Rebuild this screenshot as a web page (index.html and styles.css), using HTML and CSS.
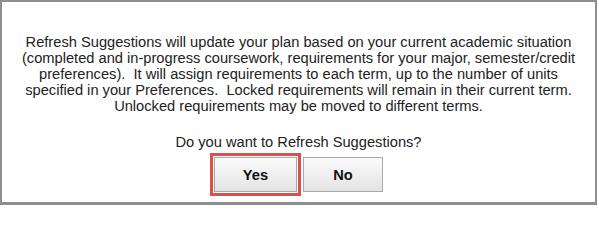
FILE: index.html
```html
<!DOCTYPE html>
<html>
<head>
<meta charset="utf-8">
<link rel="stylesheet" href="styles.css">
</head>
<body>
<div class="dialog">
  <p class="message">Refresh Suggestions will update your plan based on your current academic situation<br>(completed and in-progress coursework, requirements for your major, semester/credit<br>preferences).&nbsp; It will assign requirements to each term, up to the number of units<br>specified in your Preferences.&nbsp; Locked requirements will remain in their current term.<br>Unlocked requirements may be moved to different terms.</p>
  <p class="question">Do you want to Refresh Suggestions?</p>
  <div class="actions">
    <button class="btn btn-yes">Yes</button>
    <button class="btn btn-no">No</button>
  </div>
</div>
</body>
</html>
```

FILE: styles.css
```css
html, body {
  margin: 0;
  padding: 0;
  background: #ffffff;
}
.dialog {
  box-sizing: border-box;
  width: 597px;
  height: 205px;
  border: 2px solid #8e8e8e;
  border-bottom-width: 3px;
  background: #ffffff;
  font-family: "Liberation Sans", Arial, sans-serif;
  color: #222222;
  text-align: center;
  padding-top: 32px;
}
.message {
  margin: 0;
  font-size: 14.67px;
  line-height: 16px;
}
.question {
  margin: 20px 0 0 0;
  font-size: 14.67px;
  line-height: 16px;
}
.actions {
  margin-top: 7px;
  display: flex;
  justify-content: center;
  gap: 6px;
}
.btn {
  box-sizing: border-box;
  height: 35px;
  width: 80px;
  border: 1px solid #a9a9a9;
  border-radius: 0;
  background: linear-gradient(#fafafa, #e4e4e4);
  font-family: "Liberation Sans", Arial, sans-serif;
  font-weight: bold;
  font-size: 14.67px;
  color: #111111;
  padding: 0;
}
.btn-yes {
  width: 83px;
  outline: 3px solid #d9514b;
  outline-offset: 1px;
}
```
